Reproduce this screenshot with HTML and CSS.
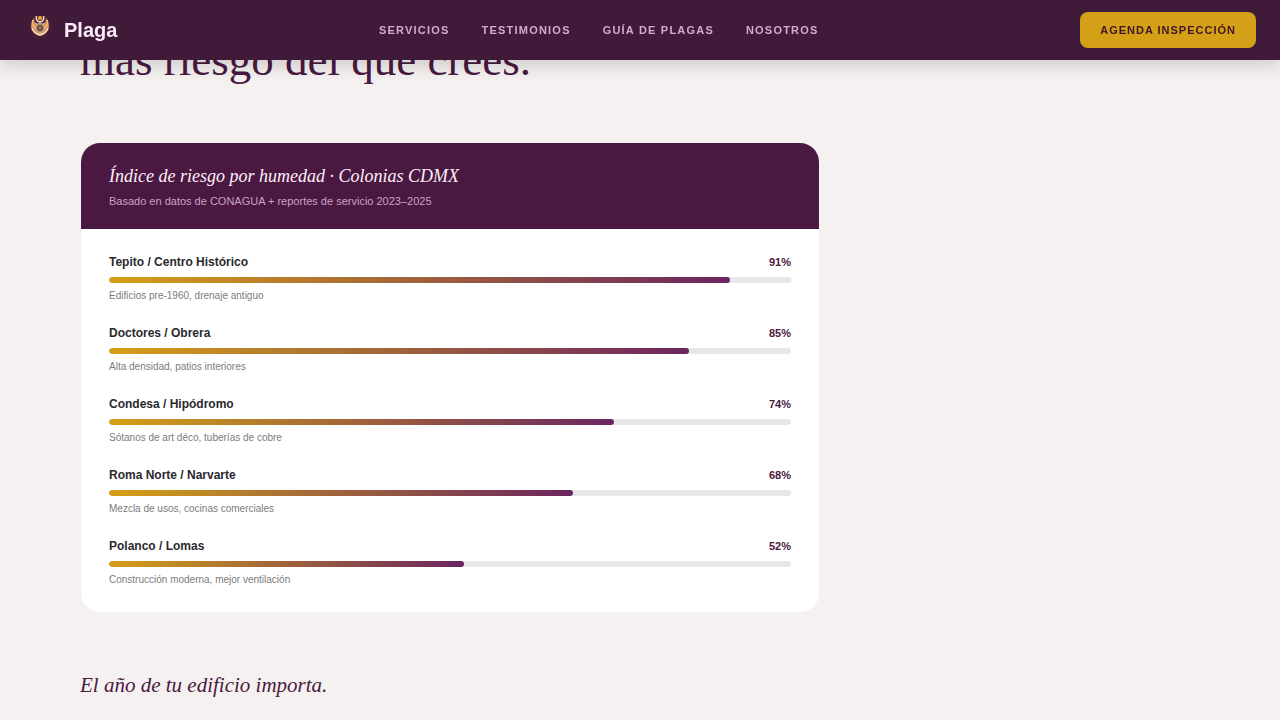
FILE: index.html
```html
<!DOCTYPE html>
<html lang="es">
<head>
    <meta charset="UTF-8">
    <meta name="viewport" content="width=device-width, initial-scale=1">
    <title>Plaga</title>
    <link rel="stylesheet" href="styles.css">
</head>
<body>
<header class="header">
    <a href="#" class="logo">
        <svg class="logo-icon" viewBox="0 0 32 32" aria-hidden="true">
            <circle cx="16" cy="14" r="12" fill="#4a2036" opacity=".5"/>
            <path d="M10 4c-2 2-3 5-3 8 0 5 4 9 9 10 5-1 9-5 9-10 0-3-1-6-3-8l-1 6H11z" fill="#d98f50"/>
            <path d="M9 6c-1 3 0 6 2 8M23 6c1 3 0 6-2 8" fill="none" stroke="#f2b878" stroke-width="1.500"/>
            <path d="M8 14c1 3 4 6 8 7 4-1 7-4 8-7" fill="none" stroke="#f5e3d5" stroke-width="1.300"/>
            <path d="M12 2c0 3 1 6 4 6s4-3 4-6" fill="#77422c" stroke="#f5e6d8" stroke-width="1.300"/>
            <circle cx="16" cy="4" r="2" fill="#e9a440"/>
            <path d="M11 9c3 2 7 2 10 0" fill="none" stroke="#f5e6d8"/>
            <circle cx="16" cy="14" r="4.500" fill="#99735a" stroke="#d8b898"/>
            <circle cx="16" cy="14" r="2.500" fill="#594044"/>
            <circle cx="16" cy="14" r="1" fill="#dcb890"/>
        </svg>
        <span>Plaga</span>
    </a>
    <nav class="nav">
        <a href="#">Servicios</a>
        <a href="#">Testimonios</a>
        <a href="#">Guía de plagas</a>
        <a href="#">Nosotros</a>
    </nav>
    <button type="button" class="btn">Agenda inspección</button>
</header>

<main class="content">
    <h2 class="title">más riesgo del que crees.</h2>

    <section class="card">
        <div class="card-head">
            <h3>Índice de riesgo por humedad · Colonias CDMX</h3>
            <p>Basado en datos de CONAGUA + reportes de servicio 2023–2025</p>
        </div>
        <ul class="list">
            <li>
                <div class="row"><span class="name">Tepito / Centro Histórico</span><span class="value">91%</span></div>
                <div class="bar"><div class="fill" style="width: 91%"></div></div>
                <p class="note">Edificios pre-1960, drenaje antiguo</p>
            </li>
            <li>
                <div class="row"><span class="name">Doctores / Obrera</span><span class="value">85%</span></div>
                <div class="bar"><div class="fill" style="width: 85%"></div></div>
                <p class="note">Alta densidad, patios interiores</p>
            </li>
            <li>
                <div class="row"><span class="name">Condesa / Hipódromo</span><span class="value">74%</span></div>
                <div class="bar"><div class="fill" style="width: 74%"></div></div>
                <p class="note">Sótanos de art déco, tuberías de cobre</p>
            </li>
            <li>
                <div class="row"><span class="name">Roma Norte / Narvarte</span><span class="value">68%</span></div>
                <div class="bar"><div class="fill" style="width: 68%"></div></div>
                <p class="note">Mezcla de usos, cocinas comerciales</p>
            </li>
            <li>
                <div class="row"><span class="name">Polanco / Lomas</span><span class="value">52%</span></div>
                <div class="bar"><div class="fill" style="width: 52%"></div></div>
                <p class="note">Construcción moderna, mejor ventilación</p>
            </li>
        </ul>
    </section>

    <h3 class="subtitle">El año de tu edificio importa.</h3>
</main>
</body>
</html>
```

FILE: styles.css
```css
* {
    margin: 0;
    padding: 0;
    box-sizing: border-box;
}

body {
    background-color: #f4f1f0;
    color: #2a2a2e;
    font-family: "Liberation Sans", Arial, sans-serif;
}

ul {
    list-style: none;
}

a {
    text-decoration: none;
}

/* header */
.header {
    position: fixed;
    top: 0;
    left: 0;
    right: 0;
    z-index: 10;
    display: flex;
    align-items: center;
    justify-content: space-between;
    height: 60px;
    padding: 0 24px;
    background-color: #401b39;
    box-shadow: 0 4px 20px rgba(0, 0, 0, 0.18);
}

.logo {
    display: flex;
    align-items: center;
    gap: 8px;
    color: #fbeaf8;
    font-size: 20px;
    font-weight: bold;
}

.logo-icon {
    width: 32px;
    height: 32px;
}

.nav {
    display: flex;
    gap: 32px;
}

.nav a {
    color: #d0abcd;
    font-size: 11px;
    font-weight: bold;
    letter-spacing: 0.11em;
    text-transform: uppercase;
}

.btn {
    height: 36px;
    padding: 0 20px;
    border: none;
    border-radius: 8px;
    background-color: #d4a017;
    color: #401528;
    font-family: inherit;
    font-size: 11px;
    font-weight: bold;
    letter-spacing: 1px;
    text-transform: uppercase;
    cursor: pointer;
}

/* content */
.content {
    padding: 35px 80px 20px;
}

.title {
    color: #4a1942;
    font-family: "Liberation Serif", "Times New Roman", serif;
    font-size: 45px;
    font-weight: normal;
    line-height: 50px;
}

.card {
    max-width: 740px;
    margin-top: 57px;
    border: 1px solid #f4f1f1;
    border-radius: 20px;
    background-color: #fff;
    overflow: hidden;
}

.card-head {
    padding: 20px 28px;
    background-color: #4a1840;
}

.card-head h3 {
    margin-bottom: 3px;
    color: #fdeffa;
    font-family: "Liberation Serif", "Times New Roman", serif;
    font-size: 18px;
    font-style: italic;
    font-weight: normal;
    line-height: 27px;
}

.card-head p {
    color: #c9a2c8;
    font-size: 11px;
    line-height: 16px;
}

.list {
    display: flex;
    flex-direction: column;
    gap: 21px;
    padding: 24px 28px 25px;
}

.row {
    display: flex;
    justify-content: space-between;
    margin-bottom: 6px;
    font-weight: bold;
    line-height: 18px;
}

.name {
    font-size: 12px;
}

.value {
    color: #4a1942;
    font-size: 11px;
}

.bar {
    height: 6px;
    border-radius: 3px;
    background-color: #e8e6e6;
    overflow: hidden;
}

.fill {
    height: 100%;
    border-radius: 3px;
    background: linear-gradient(90deg, #d4a017, #6b2560);
}

.note {
    margin-top: 6px;
    color: #7c7c7c;
    font-size: 10px;
    line-height: 14px;
}

.subtitle {
    margin-top: 56px;
    color: #4a1942;
    font-family: "Liberation Serif", "Times New Roman", serif;
    font-size: 21px;
    font-style: italic;
    font-weight: normal;
    line-height: 32px;
}
```
